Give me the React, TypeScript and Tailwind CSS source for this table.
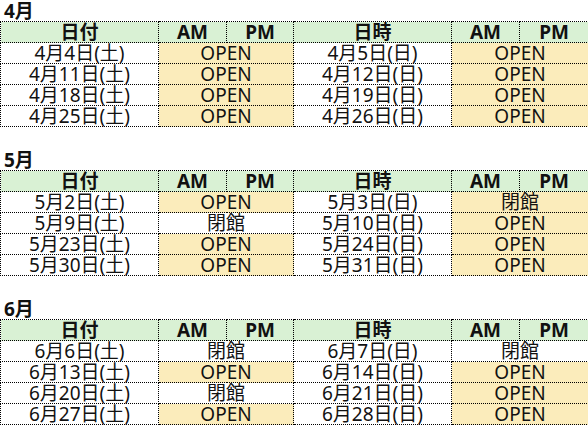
type Slot = { date: string; status: string };
type Month = { title: string; sat: Slot[]; sun: Slot[] };

const months: Month[] = [
  {
    title: "4月",
    sat: [
      { date: "4月4日(土)", status: "OPEN" },
      { date: "4月11日(土)", status: "OPEN" },
      { date: "4月18日(土)", status: "OPEN" },
      { date: "4月25日(土)", status: "OPEN" },
    ],
    sun: [
      { date: "4月5日(日)", status: "OPEN" },
      { date: "4月12日(日)", status: "OPEN" },
      { date: "4月19日(日)", status: "OPEN" },
      { date: "4月26日(日)", status: "OPEN" },
    ],
  },
  {
    title: "5月",
    sat: [
      { date: "5月2日(土)", status: "OPEN" },
      { date: "5月9日(土)", status: "閉館" },
      { date: "5月23日(土)", status: "OPEN" },
      { date: "5月30日(土)", status: "OPEN" },
    ],
    sun: [
      { date: "5月3日(日)", status: "閉館Y" },
      { date: "5月10日(日)", status: "OPEN" },
      { date: "5月24日(日)", status: "OPEN" },
      { date: "5月31日(日)", status: "OPEN" },
    ],
  },
  {
    title: "6月",
    sat: [
      { date: "6月6日(土)", status: "閉館" },
      { date: "6月13日(土)", status: "OPEN" },
      { date: "6月20日(土)", status: "閉館" },
      { date: "6月27日(土)", status: "OPEN" },
    ],
    sun: [
      { date: "6月7日(日)", status: "閉館" },
      { date: "6月14日(日)", status: "OPEN" },
      { date: "6月21日(日)", status: "OPEN" },
      { date: "6月28日(日)", status: "OPEN" },
    ],
  },
];

const cell = "border border-dotted border-black p-0 text-center align-middle";

function StatusCell({ status }: { status: string }) {
  // "閉館Y" = closed but still highlighted (5/3)
  const yellow = status === "OPEN" || status === "閉館Y";
  const label = status === "閉館Y" ? "閉館" : status;
  return (
    <td colSpan={2} className={`${cell} ${yellow ? "bg-[#fbecbb]" : "bg-white"}`}>
      {label}
    </td>
  );
}

function MonthBlock({ m, gap }: { m: Month; gap: string }) {
  return (
    <div className={gap}>
      <div className="h-[21px] pl-[4px] pt-[2px] text-[19px] font-bold leading-[19px]">{m.title}</div>
      <table className="w-[588px] table-fixed border-collapse text-[19px] leading-[19px]">
        <colgroup>
          <col className="w-[158px]" />
          <col className="w-[68px]" />
          <col className="w-[67px]" />
          <col className="w-[158px]" />
          <col className="w-[68px]" />
          <col className="w-[69px]" />
        </colgroup>
        <tbody>
          <tr className="h-[21px] bg-[#d9f1d4] font-bold">
            <td className={cell}>日付</td>
            <td className={cell}>AM</td>
            <td className={cell}>PM</td>
            <td className={cell}>日時</td>
            <td className={cell}>AM</td>
            <td className={cell}>PM</td>
          </tr>
          {m.sat.map((s, i) => (
            <tr key={s.date} className="h-[21px]">
              <td className={`${cell} bg-white`}>{s.date}</td>
              <StatusCell status={s.status} />
              <td className={`${cell} bg-white`}>{m.sun[i].date}</td>
              <StatusCell status={m.sun[i].status} />
            </tr>
          ))}
        </tbody>
      </table>
    </div>
  );
}

export default function App() {
  return (
    <div
      className="h-[426px] w-[588px] overflow-hidden bg-white text-[#111]"
      style={{ fontFamily: '"Noto Sans", "Noto Sans CJK JP", sans-serif' }}
    >
      <MonthBlock m={months[0]} gap="mb-[22px]" />
      <MonthBlock m={months[1]} gap="mb-[22px]" />
      <MonthBlock m={months[2]} gap="" />
    </div>
  );
}
